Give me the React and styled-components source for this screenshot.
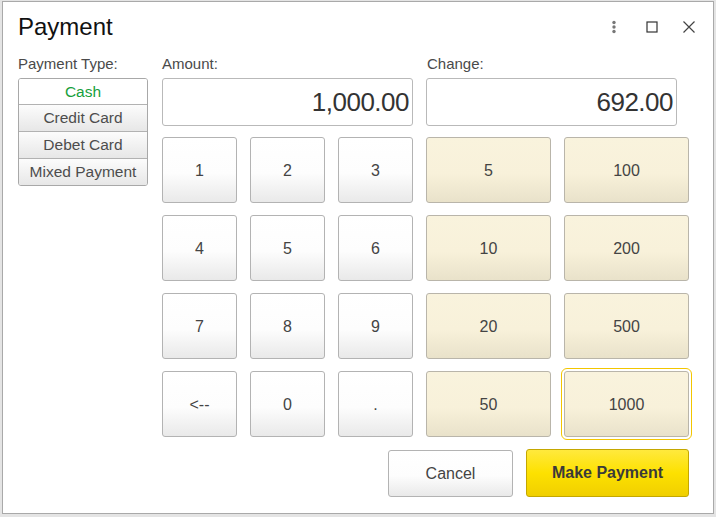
import React from "react";
import styled, { createGlobalStyle, css } from "styled-components";

const Global = createGlobalStyle`
  html, body { margin: 0; padding: 0; background: #e4e4e4; }
  body { font-family: "Liberation Sans", Arial, sans-serif; }
  * { box-sizing: border-box; }
`;

const Window = styled.div`
  width: 712px;
  height: 513px;
  margin: 1px 0 0 2px;
  background: #fff;
  border: 1px solid #a9a9a9;
  padding: 11px 15px 0 15px;
  display: flex;
  flex-direction: column;
`;

const Header = styled.div`
  display: flex;
  align-items: center;
  height: 28px;
  margin-right: -3px;
`;

const Title = styled.h1`
  margin: 0;
  font-size: 24px;
  line-height: 28px;
  font-weight: normal;
  color: #111;
  flex: 1;
`;

const IconButton = styled.button`
  border: none;
  background: none;
  padding: 0;
  width: 24px;
  height: 24px;
  display: flex;
  align-items: center;
  justify-content: center;
  margin-left: ${(p) => p.$gap || 0}px;
  cursor: pointer;
`;

const Body = styled.div`
  display: grid;
  grid-template-columns: 130px 527px;
  column-gap: 14px;
  margin-top: 14px;
`;

const Label = styled.div`
  font-size: 15px;
  line-height: 18px;
  color: #4a4a4a;
  margin-bottom: 5px;
  padding-left: ${(p) => p.$indent || 0}px;
`;

const TypeList = styled.div`
  border: 1px solid #a8a8a8;
  border-radius: 3px;
  overflow: hidden;
  display: flex;
  flex-direction: column;
`;

const TypeItem = styled.div`
  text-align: center;
  font-size: 15.5px;
  color: ${(p) => (p.$active ? "#16a03c" : "#4d4d4d")};
  background: ${(p) =>
    p.$active ? "#fff" : "linear-gradient(#fcfcfc, #e7e7e7)"};
  border-top: ${(p) => (p.$first ? "none" : "1px solid #b2b2b2")};
  height: ${(p) => (p.$first ? 25 : 27)}px;
  line-height: ${(p) => (p.$first ? 25 : 26)}px;
`;

const Right = styled.div`
  display: flex;
  flex-direction: column;
`;

const Fields = styled.div`
  display: grid;
  grid-template-columns: 251px 251px;
  column-gap: 13px;
`;

const Field = styled.div`
  height: 48px;
  border: 1px solid #b9b9b9;
  border-radius: 3px;
  font-size: 26px;
  letter-spacing: -0.5px;
  color: #333;
  text-align: right;
  line-height: 46px;
  padding-right: 3px;
`;

const Pad = styled.div`
  display: grid;
  grid-template-columns: 75px 75px 75px 125px 125px;
  grid-auto-rows: 66px;
  column-gap: 13px;
  row-gap: 12px;
  margin-top: 11px;
`;

const Key = styled.button`
  font-family: "Liberation Sans", Arial, sans-serif;
  font-size: 16px;
  color: #444;
  border: 1px solid #b3b3b3;
  border-radius: 3px;
  padding: 1px 0 0 0;
  cursor: pointer;
  background: linear-gradient(#ffffff 0%, #fdfdfd 55%, #e9e9e9 100%);
  ${(p) =>
    p.$money &&
    css`
      background: linear-gradient(#f9f3dd 0%, #f8f1da 55%, #e9e2ca 100%);
      border-color: #b9b5aa;
    `}
  ${(p) =>
    p.$focused &&
    css`
      outline: 1px solid #f3c600;
      outline-offset: 2px;
    `}
`;

const Footer = styled.div`
  display: flex;
  justify-content: flex-end;
  align-items: flex-end;
  column-gap: 13px;
  margin-top: 12px;
`;

const ActionButton = styled.button`
  font-family: "Liberation Sans", Arial, sans-serif;
  font-size: 16px;
  border-radius: 3px;
  padding: 0;
  cursor: pointer;
  width: ${(p) => (p.$primary ? 163 : 125)}px;
  height: ${(p) => (p.$primary ? 48 : 47)}px;
  color: ${(p) => (p.$primary ? "#3a3a3a" : "#444")};
  font-weight: ${(p) => (p.$primary ? "bold" : "normal")};
  border: 1px solid ${(p) => (p.$primary ? "#c4a700" : "#b3b3b3")};
  background: ${(p) =>
    p.$primary
      ? "linear-gradient(#ffe93d 0%, #fde100 50%, #f0cf00 100%)"
      : "linear-gradient(#ffffff 0%, #fdfdfd 55%, #e9e9e9 100%)"};
`;

const keys = [
  ["1", "2", "3", "5", "100"],
  ["4", "5", "6", "10", "200"],
  ["7", "8", "9", "20", "500"],
  ["<--", "0", ".", "50", "1000"],
];

export default function App() {
  return (
    <>
      <Global />
      <Window>
        <Header>
          <Title>Payment</Title>
          <IconButton aria-label="more">
            <svg width="6" height="14" viewBox="0 0 6 14">
              <circle cx="3" cy="2.5" r="1.7" fill="#777" />
              <circle cx="3" cy="7" r="1.7" fill="#777" />
              <circle cx="3" cy="11.5" r="1.7" fill="#777" />
            </svg>
          </IconButton>
          <IconButton aria-label="maximize" $gap={14}>
            <svg width="12" height="12" viewBox="0 0 12 12">
              <rect x="1" y="1" width="10" height="10" fill="none" stroke="#333" strokeWidth="1.2" />
            </svg>
          </IconButton>
          <IconButton aria-label="close" $gap={13}>
            <svg width="14" height="14" viewBox="0 0 14 14">
              <path d="M1.5 1.5 L12.5 12.5 M12.5 1.5 L1.5 12.5" stroke="#444" strokeWidth="1.2" />
            </svg>
          </IconButton>
        </Header>
        <Body>
          <div>
            <Label>Payment Type:</Label>
            <TypeList>
              <TypeItem $active $first>Cash</TypeItem>
              <TypeItem>Credit Card</TypeItem>
              <TypeItem>Debet Card</TypeItem>
              <TypeItem>Mixed Payment</TypeItem>
            </TypeList>
          </div>
          <Right>
            <Fields>
              <div>
                <Label>Amount:</Label>
                <Field>1,000.00</Field>
              </div>
              <div>
                <Label $indent={1}>Change:</Label>
                <Field>692.00</Field>
              </div>
            </Fields>
            <Pad>
              {keys.flatMap((row, r) =>
                row.map((k, c) => (
                  <Key
                    key={`${r}-${c}`}
                    $money={c > 2}
                    $focused={r === 3 && c === 4}
                  >
                    {k}
                  </Key>
                ))
              )}
            </Pad>
            <Footer>
              <ActionButton>Cancel</ActionButton>
              <ActionButton $primary>Make Payment</ActionButton>
            </Footer>
          </Right>
        </Body>
      </Window>
    </>
  );
}
